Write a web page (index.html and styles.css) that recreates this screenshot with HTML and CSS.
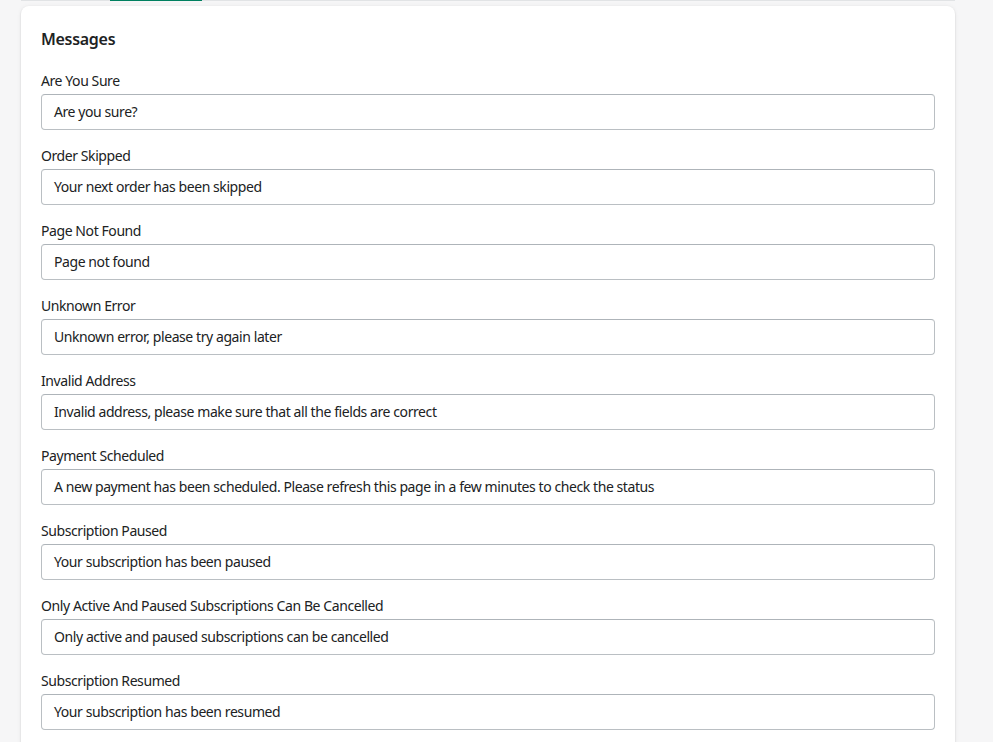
FILE: index.html
```html
<!DOCTYPE html>
<html>
<head>
<meta charset="utf-8">
<link rel="stylesheet" href="styles.css">
</head>
<body>
<div class="page">
  <div class="tabs"><div class="tab-indicator"></div></div>
  <div class="card">
    <h2 class="card-title">Messages</h2>
    <div class="field">
      <label class="label">Are You Sure</label>
      <div class="input">Are you sure?</div>
    </div>
    <div class="field">
      <label class="label">Order Skipped</label>
      <div class="input">Your next order has been skipped</div>
    </div>
    <div class="field">
      <label class="label">Page Not Found</label>
      <div class="input">Page not found</div>
    </div>
    <div class="field">
      <label class="label">Unknown Error</label>
      <div class="input">Unknown error, please try again later</div>
    </div>
    <div class="field">
      <label class="label">Invalid Address</label>
      <div class="input">Invalid address, please make sure that all the fields are correct</div>
    </div>
    <div class="field">
      <label class="label">Payment Scheduled</label>
      <div class="input">A new payment has been scheduled. Please refresh this page in a few minutes to check the status</div>
    </div>
    <div class="field">
      <label class="label">Subscription Paused</label>
      <div class="input">Your subscription has been paused</div>
    </div>
    <div class="field">
      <label class="label">Only Active And Paused Subscriptions Can Be Cancelled</label>
      <div class="input">Only active and paused subscriptions can be cancelled</div>
    </div>
    <div class="field">
      <label class="label">Subscription Resumed</label>
      <div class="input">Your subscription has been resumed</div>
    </div>
  </div>
</div>
</body>
</html>
```
FILE: styles.css
```css
html, body {
  margin: 0;
  padding: 0;
  overflow: hidden;
  height: 100%;
}
body {
  background: #f6f6f7;
  color: #202223;
  font-family: "Noto Sans", "Open Sans", sans-serif;
  font-size: 14px;
  line-height: 20px;
  letter-spacing: -0.42px;
}
.page {
  padding: 0 38px 0 21px;
}
.tabs {
  height: 1px;
  background: #e1e3e5;
  display: flex;
}
.tab-indicator {
  margin-left: 89px;
  width: 92px;
  height: 1px;
  background: #008060;
}
.card {
  margin-top: 5px;
  background: #fff;
  border-radius: 8px;
  box-shadow: 0 0 5px rgba(23, 24, 24, 0.05), 0 1px 2px rgba(0, 0, 0, 0.15);
  padding: 21px 20px 20px;
}
.card-title {
  margin: 0 0 19px;
  font-size: 16px;
  font-weight: 600;
  line-height: 24px;
  letter-spacing: -0.3px;
}
.field {
  display: flex;
  flex-direction: column;
  gap: 4px;
  margin-bottom: 15px;
}
.label {
  display: block;
  padding-top: 1px;
  margin-bottom: -1px;
}
.input {
  height: 36px;
  box-sizing: border-box;
  border: 1px solid #babfc3;
  border-top-color: #aeb4b9;
  border-radius: 4px;
  padding: 7px 12px;
  white-space: nowrap;
  overflow: hidden;
}
```
